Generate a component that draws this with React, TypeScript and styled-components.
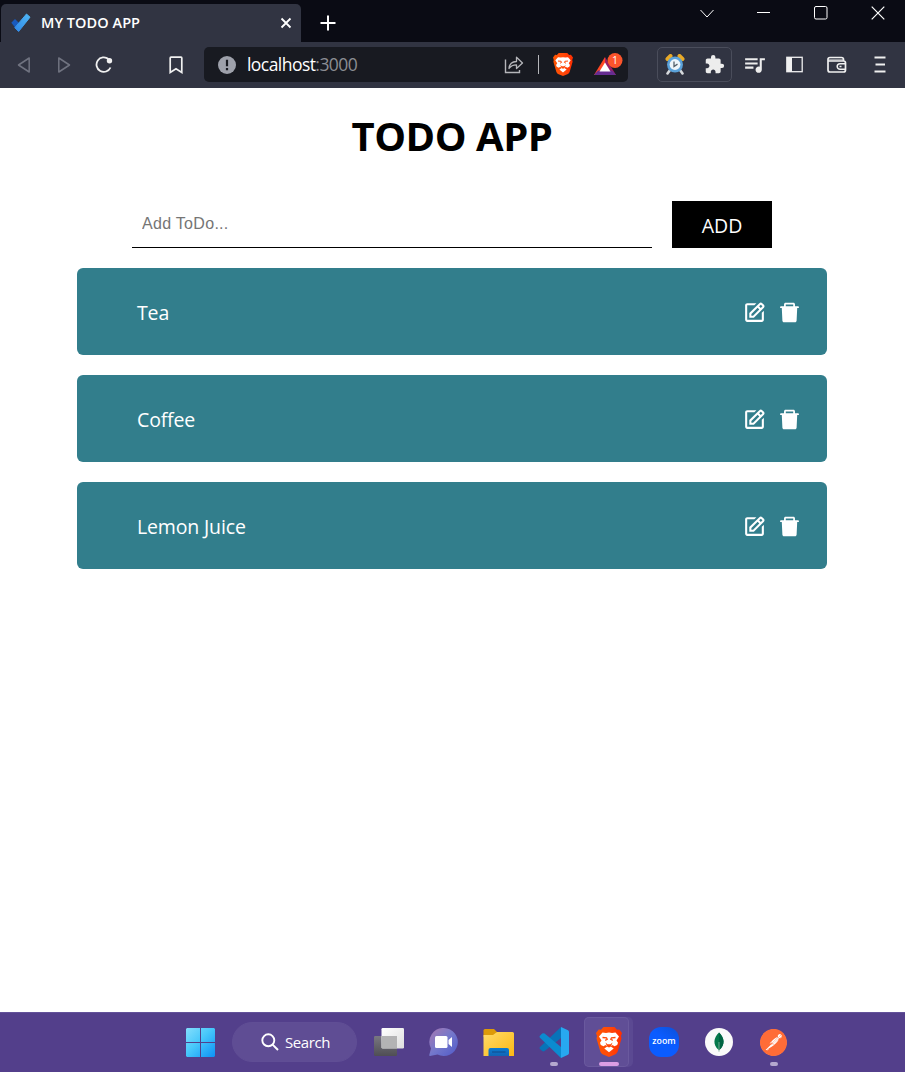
import React, { useState } from "react";
import styled, { createGlobalStyle } from "styled-components";
import { BiEdit } from "react-icons/bi";
import { AiFillDelete } from "react-icons/ai";
import { MdExtension, MdQueueMusic } from "react-icons/md";
import { SiPostman } from "react-icons/si";

const GlobalStyle = createGlobalStyle`
  * { box-sizing: border-box; }
  body { margin: 0; background: #fff; font-family: "Open Sans", "Noto Sans", sans-serif; }
`;

const Window = styled.div`
  display: flex;
  flex-direction: column;
  width: 905px;
  height: 1072px;
  overflow: hidden;
`;

/* ---------- Tab strip ---------- */

const TabStrip = styled.header`
  display: flex;
  height: 42px;
  background: #0a0b14;
  color: #fff;
`;

const Tab = styled.div`
  display: flex;
  align-items: center;
  width: 300px;
  height: 38px;
  margin: 4px 0 0 1px;
  padding: 0 9px 1px 10px;
  border-radius: 5px 5px 0 0;
  background: #313442;
`;

const TabTitle = styled.span`
  flex: 1;
  margin-left: 10px;
  font-size: 14.5px;
  font-weight: 600;
  letter-spacing: 0.05px;
  line-height: 18px;
  padding-top: 1px;
  white-space: nowrap;
`;

const Slot = styled.span<{ $w: number; $h?: number; $ml?: number }>`
  display: flex;
  flex: none;
  align-items: center;
  justify-content: center;
  width: ${(p) => p.$w}px;
  height: ${(p) => (p.$h ? `${p.$h}px` : "100%")};
  margin-left: ${(p) => p.$ml ?? 0}px;
`;

const WindowControls = styled.div`
  display: flex;
  height: 26px;
  margin-left: auto;
`;

/* ---------- Toolbar ---------- */

const Toolbar = styled.nav`
  display: flex;
  align-items: center;
  height: 46px;
  padding: 0 0 1px 4px;
  background: #313442;
  color: #f0f0f0;
`;

const AddressBar = styled.div`
  display: flex;
  align-items: center;
  width: 424px;
  height: 35px;
  margin-left: 8px;
  border-radius: 5px;
  background: #181a21;
`;

const Url = styled.span`
  flex: 1;
  margin-left: 11px;
  padding-bottom: 1px;
  color: #8b8d93;
  font-size: 17.5px;
  letter-spacing: -0.55px;
  white-space: nowrap;
`;

const Host = styled.span`
  color: #fff;
`;

const Separator = styled.span`
  width: 1px;
  height: 19px;
  background: #b5b6ba;
`;

const ExtensionBox = styled.div`
  display: flex;
  width: 75px;
  height: 35px;
  margin: 0 2px 0 29px;
  border: 1px solid #4a4d5b;
  border-radius: 5px;
`;

/* ---------- Page ---------- */

const Page = styled.main`
  display: flex;
  flex: 1;
  flex-direction: column;
  align-items: center;
  padding-right: 1px;
  background: #fff;
`;

const Title = styled.h1`
  margin: 20px 0 0;
  font-size: 40px;
  font-weight: 700;
  line-height: 56px;
  letter-spacing: -0.45px;
  color: #000;
  white-space: nowrap;
`;

const Form = styled.form`
  display: flex;
  gap: 20px;
  width: 640px;
  height: 47px;
  margin-top: 37px;
`;

const TodoInput = styled.input`
  flex: 1;
  min-width: 0;
  padding: 0 10px;
  border: none;
  border-bottom: 1px solid #000;
  outline: none;
  font-family: "Liberation Sans", Arial, sans-serif;
  font-size: 16px;
  letter-spacing: 0.3px;
  &::placeholder { color: #757575; }
`;

const AddButton = styled.button`
  width: 100px;
  padding: 2px 0 0;
  border: none;
  background: #000;
  color: #fff;
  font-family: inherit;
  font-size: 19.5px;
`;

const List = styled.ul`
  display: flex;
  flex-direction: column;
  gap: 20px;
  width: 750px;
  margin: 20px 0 0;
  padding: 0;
  list-style: none;
`;

const Item = styled.li`
  display: flex;
  align-items: center;
  height: 87px;
  padding: 0 25px 0 60px;
  border-radius: 6px;
  background: #327e8c;
  color: #fff;
`;

const ItemText = styled.span`
  flex: 1;
  padding-top: 1px;
  font-size: 19.5px;
  letter-spacing: -0.15px;
`;

const ItemActions = styled.span`
  display: flex;
  gap: 10px;
  padding-top: 1px;
`;

/* ---------- Taskbar ---------- */

const Taskbar = styled.footer`
  display: flex;
  height: 60px;
  padding: 0 0 1px 173px;
  border-top: 1px solid #63529a;
  background: #533f8b;
`;

const SearchBox = styled.div`
  display: flex;
  align-items: center;
  align-self: center;
  width: 125px;
  height: 40px;
  margin: 0 4px;
  padding-left: 28px;
  border: 1px solid #604e95;
  border-radius: 20px;
  background: #5f4d94;
  color: #fff;
  font-size: 15px;
`;

const SearchLabel = styled.span`
  margin-left: 6px;
  letter-spacing: -0.4px;
`;

const TaskItem = styled.div<{ $active?: boolean }>`
  position: relative;
  display: flex;
  flex: none;
  align-items: center;
  justify-content: center;
  width: ${(p) => (p.$active ? 45 : 55)}px;
  height: ${(p) => (p.$active ? "50px" : "100%")};
  margin: ${(p) => (p.$active ? "4px 7px 0 3px" : "0")};
  padding-left: ${(p) => (p.$active ? 4 : 0)}px;
  border-radius: 5px;
  background: ${(p) => (p.$active ? "#604e96" : "transparent")};
  box-shadow: ${(p) => (p.$active ? "inset 0 0 0 1px #6a599e, 4px 0 0 0 #5b4992" : "none")};
`;

const Indicator = styled.span<{ $active?: boolean }>`
  position: absolute;
  bottom: ${(p) => (p.$active ? 1 : 5)}px;
  left: ${(p) => (p.$active ? "calc(50% + 2px)" : "50%")};
  width: ${(p) => (p.$active ? 20 : 8)}px;
  height: 4px;
  border-radius: 2px;
  background: ${(p) => (p.$active ? "#dc9ee4" : "#b4a8cf")};
  transform: translateX(-50%);
`;

/* ---------- Drawings ---------- */

const CheckLogo = () => (
  <svg width="20" height="20" viewBox="0 0 20 20">
    <defs>
      <linearGradient id="check" x1="0" y1="1" x2="1" y2="0">
        <stop offset="0" stopColor="#2f87e8" />
        <stop offset="1" stopColor="#50b8f5" />
      </linearGradient>
    </defs>
    <path d="M.3 9.800 4 6l7 7-4 5z" fill="#195abd" />
    <path d="M15.500 1 19 4.200 7.600 18.500 3.800 14.700z" fill="url(#check)" stroke="url(#check)" strokeLinejoin="round" />
  </svg>
);

const BraveLogo = ({ w, h, id }: { w: number; h: number; id: string }) => (
  <svg width={w} height={h} viewBox="0 0 26 30" preserveAspectRatio="none">
    <defs>
      <linearGradient id={id}>
        <stop offset="0" stopColor="#ff5500" />
        <stop offset=".5" stopColor="#ff4a0a" />
        <stop offset="1" stopColor="#ff2d00" />
      </linearGradient>
    </defs>
    <path d="M7.500 0h11l2.500 2.700 2.300-.3L26 6l-1 3 .5 2.500-3.800 13q-.6 1.800-2.200 2.800L13 30l-6.500-2.700q-1.600-1-2.200-2.800L.5 11.500 1 9 0 6l2.700-3.600 2.300.3z" fill={`url(#${id})`} />
    <path d="M6.500 5.500 10 6l3-.4 3 .4 3.500-.5L23 9.500l-2.500 4 1.500 2.300-.8 2.200-2.700 1.200-2-1.200-1.800 1.500 3 2-4.700 3.800-4.700-3.800 3-2-1.800-1.500-2 1.200L4.800 18 4 15.800l1.500-2.300L3 9.500z" fill="#fff" />
    <path d="m6.500 10.500 4 .3.700 1.500-2 1M19.500 10.500l-4 .3-.7 1.500 2 1" fill="none" stroke="#ff4a0a" strokeWidth="1.300" />
    <path d="m9.500 15.500 2 1.800h3l2-1.800-1.500 4L13 20.500l-2-1z" fill="#ff4a0a" />
  </svg>
);

const BatLogo = () => (
  <svg width="32" height="27" viewBox="0 0 32 27">
    <path d="M13 6 2 24h5.500L13 15z" fill="#ff4724" />
    <path d="M13 6 24 24h-5L13 15z" fill="#9e1f63" />
    <path d="M2 24h22l-4-4.500H6z" fill="#662d91" />
    <path d="M13 11.500 18.500 20.500h-11z" fill="#fff" />
    <rect x="15.500" y="2" width="15" height="15" rx="7.500" fill="#fb542b" />
    <text x="23" y="13.300" textAnchor="middle" fontSize="10.500" fill="#fff">1</text>
  </svg>
);

const AlarmClock = () => (
  <svg width="20" height="21" viewBox="0 0 20 21">
    <path d="m5 16-2.500 3.500M15 16l2.500 3.500" stroke="#d6d9dc" strokeWidth="2.600" strokeLinecap="round" />
    <path d="m2.500 5 3-3M17.500 5l-3-3" stroke="#e9aa28" strokeWidth="4" strokeLinecap="round" />
    <circle cx="10" cy="10.500" r="8" fill="#5ba2da" />
    <circle cx="10" cy="10.500" r="5.400" fill="#eef5fa" />
    <path d="M9 7.400v5.200l3.500-2.500" fill="none" stroke="#56616b" strokeWidth="1.300" />
  </svg>
);

const WindowsLogo = () => (
  <svg width="29" height="29" viewBox="0 0 29 29">
    <defs>
      <linearGradient id="win" gradientUnits="userSpaceOnUse" x1="0" y1="0" x2="29" y2="29">
        <stop offset="0" stopColor="#84defc" />
        <stop offset=".45" stopColor="#48c8fb" />
        <stop offset="1" stopColor="#0c91f5" />
      </linearGradient>
    </defs>
    <path d="M1 0h13v14H0V1zM15 0h13l1 1v13H15zM0 15h14v14H1l-1-1zM15 15h14v13l-1 1H15z" fill="url(#win)" />
  </svg>
);

const TaskViewIcon = () => (
  <svg width="30" height="28" viewBox="0 0 30 28">
    <defs>
      <linearGradient id="tvFront" x1="0" y1="0" x2="1" y2="1">
        <stop offset="0" stopColor="#fff" /><stop offset="1" stopColor="#dedede" />
      </linearGradient>
      <linearGradient id="tvBack" x1="0" y1="0" x2="0" y2="1">
        <stop offset="0" stopColor="#797781" /><stop offset="1" stopColor="#4f4e54" />
      </linearGradient>
    </defs>
    <rect y="8" width="23" height="20" rx="1.200" fill="url(#tvBack)" />
    <rect x="7.500" width="22.500" height="20.500" rx="1.200" fill="url(#tvFront)" />
    <path d="M8 8h15v12H8z" fill="#b3b3b4" />
  </svg>
);

const ChatIcon = () => (
  <svg width="29" height="28" viewBox="0 0 29 28">
    <defs>
      <linearGradient id="chat" x1="0" y1="0" x2="1" y2="1">
        <stop offset="0" stopColor="#a878b0" /><stop offset=".5" stopColor="#7478cb" /><stop offset="1" stopColor="#5059c9" />
      </linearGradient>
    </defs>
    <path d="M15 0a14 14 0 1 1-6.500 26.500L1 28q-1-.3-.7-1.200L2 20.500A14 14 0 0 1 15 0z" fill="url(#chat)" />
    <rect x="6" y="8" width="12.500" height="12" rx="1.500" fill="#fff" />
    <path d="m19.500 12 3.500-3v10l-3.500-3z" fill="#fff" />
  </svg>
);

const FolderIcon = () => (
  <svg width="31" height="28" viewBox="-.5 0 31 28">
    <defs>
      <linearGradient id="folder" x1="0" y1="0" x2="1" y2="1">
        <stop offset="0" stopColor="#ffdb69" /><stop offset="1" stopColor="#fcb813" />
      </linearGradient>
      <linearGradient id="folderTray" x1="0" y1="0" x2="0" y2="1">
        <stop offset="0" stopColor="#0a7cd0" /><stop offset="1" stopColor="#1264b4" />
      </linearGradient>
    </defs>
    <path d="M1.500 1h9l3.500 3.500V9H0V2.500Q0 1 1.500 1z" fill="#dd9a08" />
    <path d="M0 7h9.500l4-3H29q1.500 0 1.500 1.500V28H0z" fill="url(#folder)" />
    <path d="M5 28v-6q0-2 2-2h16.500q2 0 2 2v6z" fill="url(#folderTray)" />
    <path d="M8.500 24h13.500" stroke="#114a8b" />
  </svg>
);

const VsCodeIcon = () => (
  <svg width="30" height="31" viewBox="0 0 30 31">
    <path d="M22 0 1.500 19.500q-2 1.500 0 3l1.700 1.600q1.200.8 2.400 0L22 11z" fill="#0873b8" />
    <path d="M22 31 1.500 11.200q-2-1.500 0-3l1.700-1.600q1.200-.8 2.400 0L22 20z" fill="#0b8bd0" />
    <path d="m22 0 7 3.200q1 .5 1 1.700v21.200q0 1.200-1 1.700L22 31z" fill="#27a8f0" />
  </svg>
);

const ZoomIcon = () => (
  <svg width="30" height="30" viewBox="0 0 30 30">
    <defs>
      <linearGradient id="zoom" x1="1" y1="0" x2=".3" y2="1">
        <stop offset="0" stopColor="#0c50d8" /><stop offset=".5" stopColor="#0b5cff" />
      </linearGradient>
    </defs>
    <rect width="30" height="30" rx="12" fill="url(#zoom)" />
    <text transform="translate(15 17) scale(1.100 1)" textAnchor="middle" fontSize="8" fontWeight="600" fill="#fff">zoom</text>
  </svg>
);

const MongoIcon = () => (
  <svg width="28" height="28" viewBox="0 0 28 28">
    <circle cx="14" cy="14" r="14" fill="#fafafa" />
    <path d="M14 4.500c5.500 5.500 6.500 12 .3 17.500L14 24l-.3-2C7.500 16.500 8.500 10 14 4.500z" fill="#05794b" />
    <path d="M14 4.500c5.500 5.500 6.500 12 .3 17.500z" fill="#006442" />
    <path d="M14 14v10" stroke="#b7cfc0" strokeWidth=".6" />
  </svg>
);

const PostmanIcon = () => (
  <svg width="27" height="27" viewBox="0 0 24 24">
    <circle cx="12" cy="12" r="11.500" fill="#fff" />
    <SiPostman size={24} color="#ff6c37" />
  </svg>
);

const Stroke = styled.svg`
  fill: none;
  stroke: currentColor;
  stroke-width: 2;
`;

const TODOS = ["Tea", "Coffee", "Lemon Juice"];

export default function App() {
  const [draft, setDraft] = useState("");
  return (
    <Window>
      <GlobalStyle />
      <TabStrip>
        <Tab>
          <CheckLogo />
          <TabTitle>MY TODO APP</TabTitle>
          <Stroke width="12" height="12" viewBox="0 0 12 12"><path d="m1.500 1.500 9 9m0-9-9 9" strokeWidth="1.800" /></Stroke>
        </Tab>
        <Slot $w={30} $h={46} $ml={12}>
          <Stroke width="16" height="16" viewBox="0 0 16 16"><path d="M8 .5v15M.5 8h15" /></Stroke>
        </Slot>
        <WindowControls>
          <Slot $w={56}><Stroke width="14" height="9" viewBox="0 0 14 9"><path d="m.5 1 6.500 7 6.500-7" strokeWidth="1" /></Stroke></Slot>
          <Slot $w={57}><Stroke width="13" height="2" viewBox="0 0 13 2"><path d="M0 .5h13" strokeWidth="1" /></Stroke></Slot>
          <Slot $w={58}><Stroke width="14" height="14" viewBox="0 0 14 14"><rect x=".5" y=".5" width="12.500" height="12.500" rx="1.500" strokeWidth="1" /></Stroke></Slot>
          <Slot $w={55}><Stroke width="14" height="14" viewBox="0 0 14 14"><path d="m.7.7 12.600 12.600m0-12.600L.7 13.300" strokeWidth="1.200" /></Stroke></Slot>
        </WindowControls>
      </TabStrip>

      <Toolbar>
        <Slot $w={40}><Stroke width="14" height="18" viewBox="0 0 14 18" color="#707380"><path d="M12.200 2v14L1.500 9z" strokeWidth="1.500" strokeLinejoin="round" /></Stroke></Slot>
        <Slot $w={40}><Stroke width="14" height="18" viewBox="0 0 14 18" color="#707380"><path d="M1.800 2v14L12.500 9z" strokeWidth="1.500" strokeLinejoin="round" /></Stroke></Slot>
        <Slot $w={40}>
          <Stroke width="18" height="18" viewBox="0 0 18 18">
            <path d="M13.500 3A7.300 7.300 0 1 0 15.500 11.500" strokeWidth="1.800" />
            <circle cx="14.500" cy="4.800" r="2.700" fill="currentColor" stroke="none" />
          </Stroke>
        </Slot>
        <Slot $w={40} $ml={32}><Stroke width="14" height="18" viewBox="0 0 14 18"><path d="M1.200 2q0-.8.8-.8h10q.8 0 .8.800v14.500L7 12.800l-5.800 3.700z" strokeWidth="1.700" /></Stroke></Slot>
        <AddressBar>
          <Slot $w={19} $ml={13}>
            <svg width="18" height="18" viewBox="0 0 18 18">
              <circle cx="9" cy="9" r="9" fill="#9ea1ab" />
              <path d="M9 3.800v6.400M9 12v2.200" stroke="#181a21" strokeWidth="2.200" />
            </svg>
          </Slot>
          <Url><Host>localhost</Host>:3000</Url>
          <Stroke width="20" height="19" viewBox="0 0 20 19" color="#b5b6ba">
            <path d="M1.500 4.500v13h14v-2.500" strokeWidth="1.400" />
            <path d="M5 13.500c.5-5 3-7 7.500-7V2.200L18.500 8l-6 5.500V9.800c-3.500 0-5.500.7-7.500 3.700z" strokeWidth="1.300" strokeLinejoin="round" />
          </Stroke>
          <Slot $w={1} $ml={14}><Separator /></Slot>
          <Slot $w={20} $ml={14}><BraveLogo w={20} h={23} id="braveSmall" /></Slot>
          <Slot $w={32} $ml={19} $h={33}><BatLogo /></Slot>
          <Slot $w={4} />
        </AddressBar>
        <ExtensionBox>
          <Slot $w={33}><AlarmClock /></Slot>
          <Slot $w={46}><MdExtension size={21} color="#ededed" /></Slot>
        </ExtensionBox>
        <Slot $w={40}><MdQueueMusic size={25} color="#ededed" /></Slot>
        <Slot $w={40}>
          <Stroke width="17" height="17" viewBox="0 0 17 17"><rect x=".8" y="1.300" width="15.400" height="14.400" strokeWidth="1.300" /><path d="M1 1h5v15H1z" fill="currentColor" stroke="none" /></Stroke>
        </Slot>
        <Slot $w={44} $ml={1}>
          <Stroke width="20" height="18" viewBox="0 0 20 18">
            <path d="M16.500 5V3.500q0-2-2-2H3q-2 0-2 2V14q0 2 2 2h13.500q2 0 2-2V7q0-2-2-2H1.500" strokeWidth="1.700" />
            <path d="M18.500 7.700H13a2.800 2.800 0 0 0 0 5.600h5.500M12.500 10.500h2" strokeWidth="1.500" />
            <path d="M2 3h14v1.500H2z" fill="currentColor" stroke="none" opacity=".5" />
          </Stroke>
        </Slot>
        <Slot $w={41}><Stroke width="12" height="17" viewBox="0 0 12 17"><path d="M.5 1.500h11M1.500 8.500h9.500M.5 15.500h11" strokeWidth="2" /></Stroke></Slot>
      </Toolbar>

      <Page>
        <Title>TODO APP</Title>
        <Form onSubmit={(e) => e.preventDefault()}>
          <TodoInput placeholder="Add ToDo..." value={draft} onChange={(e) => setDraft(e.target.value)} />
          <AddButton type="submit">ADD</AddButton>
        </Form>
        <List>
          {TODOS.map((todo) => (
            <Item key={todo}>
              <ItemText>{todo}</ItemText>
              <ItemActions>
                <BiEdit size={25} />
                <AiFillDelete size={25} />
              </ItemActions>
            </Item>
          ))}
        </List>
      </Page>

      <Taskbar>
        <TaskItem><WindowsLogo /></TaskItem>
        <SearchBox>
          <Stroke width="18" height="18" viewBox="0 0 18 18"><circle cx="7.300" cy="7.300" r="6" strokeWidth="1.900" /><path d="m11.600 11.600 5.400 5.400" strokeWidth="2" /></Stroke>
          <SearchLabel>Search</SearchLabel>
        </SearchBox>
        <TaskItem><TaskViewIcon /></TaskItem>
        <TaskItem><ChatIcon /></TaskItem>
        <TaskItem><FolderIcon /></TaskItem>
        <TaskItem><VsCodeIcon /><Indicator /></TaskItem>
        <TaskItem $active><BraveLogo w={26} h={30} id="braveLarge" /><Indicator $active /></TaskItem>
        <TaskItem><ZoomIcon /></TaskItem>
        <TaskItem><MongoIcon /></TaskItem>
        <TaskItem><PostmanIcon /><Indicator /></TaskItem>
      </Taskbar>
    </Window>
  );
}
